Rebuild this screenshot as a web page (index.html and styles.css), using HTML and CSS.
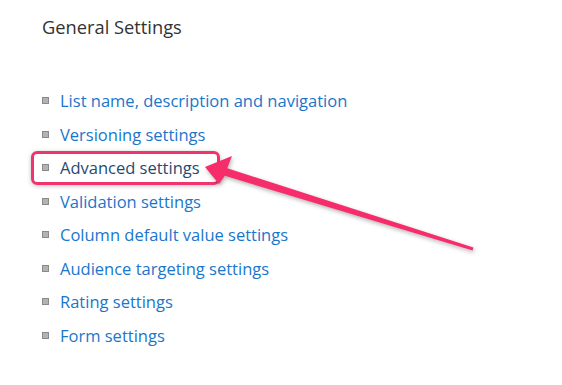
FILE: index.html
```html
<!DOCTYPE html>
<html lang="en">
<head>
    <meta charset="UTF-8">
    <meta name="viewport" content="width=device-width, initial-scale=1.0">
    <title>General Settings</title>
    <link rel="stylesheet" href="styles.css">
</head>
<body>
    <div class="page">
        <h2 class="section-title">General Settings</h2>
        <ul class="settings-list">
            <li><a href="#">List name, description and navigation</a></li>
            <li><a href="#">Versioning settings</a></li>
            <li class="highlight"><a href="#">Advanced settings</a></li>
            <li><a href="#">Validation settings</a></li>
            <li><a href="#">Column default value settings</a></li>
            <li><a href="#">Audience targeting settings</a></li>
            <li><a href="#">Rating settings</a></li>
            <li><a href="#">Form settings</a></li>
        </ul>

        <!-- annotation arrow pointing at the highlighted row -->
        <svg class="callout" width="562" height="385" viewBox="0 0 562 385">
            <polygon points="205,167 232,156 227.2,168.2 473.4,247.6 472.6,250.4 224.8,175.8 219,184" fill="#f72d6b"/>
        </svg>
    </div>
</body>
</html>
```

FILE: styles.css
```css
body {
    margin: 0;
    font-family: "Open Sans", "Noto Sans", sans-serif;
    background: #fff;
}
.page {
    position: relative;
    width: 562px;
    height: 385px;
    padding: 14px 0 0 42px;
    box-sizing: border-box;
}
.section-title {
    margin: 0;
    font-size: 18.3px;
    font-weight: normal;
    color: #333;
    line-height: 26px;
}
.settings-list {
    list-style: none;
    margin: 44px 0 0 0;
    padding: 0;
}
.settings-list li {
    display: flex;
    align-items: center;
    height: 33.5px;
    box-sizing: border-box;
}
.settings-list li::before {
    content: "";
    width: 5px;
    height: 5px;
    margin-right: 11px;
    background: #b3b3b3;
    border: 1px solid #8a8a8a;
    flex-shrink: 0;
}
.settings-list a {
    color: #1a76cc;
    text-decoration: none;
    font-size: 16.5px;
}
.settings-list li.highlight {
    width: fit-content;
    margin-left: -11px;
    padding: 0 17px 0 8px;
    border: 3px solid #f0356e;
    border-radius: 6px;
    box-shadow: 0 1px 4px rgba(0, 0, 0, 0.25);
}
.settings-list li.highlight a {
    color: #1f4a72;
}
.callout {
    position: absolute;
    top: 0;
    left: 0;
    pointer-events: none;
    filter: drop-shadow(1px 2px 2px rgba(0, 0, 0, 0.3));
}
```
